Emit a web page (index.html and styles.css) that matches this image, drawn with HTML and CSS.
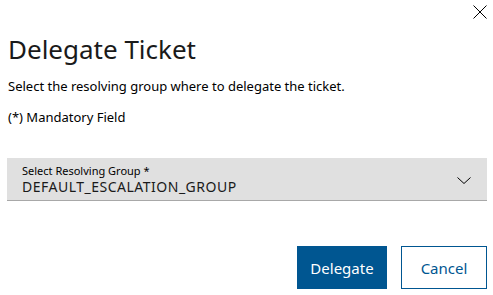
FILE: index.html
```html
<!DOCTYPE html>
<html>
<head>
<meta charset="utf-8">
<link rel="stylesheet" href="styles.css">
</head>
<body>
<div class="dialog">
  <div class="topbar">
    <button class="close" aria-label="Close">
      <svg width="14" height="14" viewBox="0 0 14 14"><path d="M0.5 0.5L13.5 13.5M13.5 0.5L0.5 13.5" stroke="#000" stroke-width="1" fill="none"/></svg>
    </button>
  </div>
  <h1 class="title">Delegate Ticket</h1>
  <p class="desc">Select the resolving group where to delegate the ticket.</p>
  <p class="mandatory">(*) Mandatory Field</p>
  <div class="select">
    <div class="select-text">
      <div class="select-label">Select Resolving Group *</div>
      <div class="select-value">DEFAULT_ESCALATION_GROUP</div>
    </div>
    <svg class="chevron" width="14" height="7" viewBox="0 0 14 7"><path d="M0.5 0.5L7 6.5L13.5 0.5" stroke="#000" stroke-width="1" fill="none"/></svg>
  </div>
  <div class="actions">
    <button class="btn primary">Delegate</button>
    <button class="btn secondary">Cancel</button>
  </div>
</div>
</body>
</html>
```
FILE: styles.css
```css
html, body {
  margin: 0;
  padding: 0;
  background: #fff;
}
body {
  font-family: "Noto Sans", "Open Sans", sans-serif;
  color: #000;
}
.dialog {
  width: 493px;
  height: 295px;
  box-sizing: border-box;
  padding: 0 5px 0 7px;
  display: flex;
  flex-direction: column;
}
.topbar {
  display: flex;
  justify-content: flex-end;
  height: 24px;
  padding-top: 5px;
  box-sizing: border-box;
  padding-right: 1px;
}
.close {
  border: 0;
  background: none;
  padding: 0;
  margin: 0;
  width: 14px;
  height: 14px;
  display: block;
}
.close svg { display: block; }
.title {
  margin: 9px 0 0 1px;
  font-size: 26px;
  font-weight: 400;
  line-height: 32px;
  color: #1a1a1a;
}
.desc {
  margin: 12px 0 0 1px;
  font-size: 13px;
  line-height: 18px;
}
.mandatory {
  margin: 13px 0 0 1px;
  font-size: 13px;
  line-height: 18px;
}
.select {
  margin: 32px 1px 0 0;
  height: 43px;
  box-sizing: border-box;
  background: #e0e0e0;
  border-bottom: 1px solid #a8a8a8;
  display: flex;
  align-items: flex-start;
  padding: 6px 16px 0 15px;
  justify-content: space-between;
}
.select-text {
  display: flex;
  flex-direction: column;
}
.select-label {
  font-size: 11px;
  line-height: 13px;
}
.select-value {
  margin-top: 2px;
  font-size: 14px;
  line-height: 16px;
  letter-spacing: 0.5px;
  color: #1a1a1a;
}
.chevron { display: block; align-self: center; margin-top: -4px; }
.actions {
  margin: 45px 1px 0 0;
  display: flex;
  justify-content: flex-end;
  gap: 14px;
}
.btn {
  font-family: inherit;
  font-size: 15px;
  height: 43px;
  box-sizing: border-box;
  padding: 0;
  margin: 0;
}
.primary {
  width: 90px;
  background: #005691;
  color: #fff;
  border: 0;
}
.secondary {
  width: 86px;
  background: #fff;
  color: #005691;
  border: 1px solid #005691;
}
```
